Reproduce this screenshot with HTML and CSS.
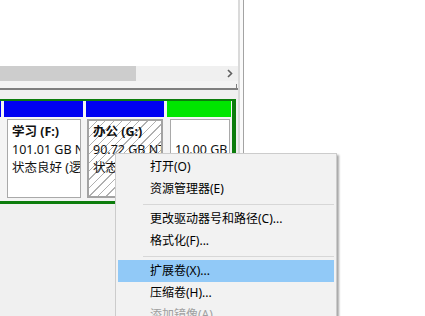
FILE: index.html
```html
<!DOCTYPE html>
<html lang="zh-CN">
<head>
<meta charset="UTF-8" />
<title>磁盘管理</title>
<link rel="stylesheet" href="styles.css">
</head>
<body>

<div class="window">
  <div class="pane">
    <div class="list"></div>
    <div class="hscroll">
      <div class="thumb"></div>
      <svg class="arrow" width="6" height="9" viewBox="0 0 6 9">
        <path d="M1 1 L4.5 4.5 L1 8" fill="none" stroke="#606060" stroke-width="1.6" />
      </svg>
    </div>
    <div class="list-foot"><span class="tick"></span></div>

    <div class="disks">
      <div class="volume-frame">
        <div class="part part-cut">
          <div class="bar bar-primary"></div>
        </div>
        <div class="part part-f">
          <div class="bar bar-primary"></div>
          <div class="box">
            <div class="vol-name">学习 (F:)</div>
            <div>101.01 GB NTFS</div>
            <div>状态良好 (逻辑驱动器)</div>
          </div>
        </div>
        <div class="part part-g">
          <div class="bar bar-primary"></div>
          <div class="box box-selected">
            <div class="vol-name">办公 (G:)</div>
            <div>90.72 GB NTFS</div>
            <div>状态良好 (逻辑驱动器)</div>
          </div>
        </div>
        <div class="part part-free">
          <div class="bar bar-free"></div>
          <div class="box box-free">
            <div class="vol-name">&nbsp;</div>
            <div>10.00 GB</div>
            <div>可用空间</div>
          </div>
        </div>
      </div>
    </div>
  </div>
  <div class="split"></div>
  <div class="side"></div>
</div>

<!-- context menu for the selected volume -->
<div class="menu" role="menu">
  <div class="menu-item">打开(O)</div>
  <div class="menu-item">资源管理器(E)</div>
  <div class="menu-sep"></div>
  <div class="menu-item">更改驱动器号和路径(C)...</div>
  <div class="menu-item">格式化(F)...</div>
  <div class="menu-sep"></div>
  <div class="menu-item menu-item-hover">扩展卷(X)...</div>
  <div class="menu-item">压缩卷(H)...</div>
  <div class="menu-item menu-item-disabled">添加镜像(A)...</div>
  <div class="menu-item">删除卷(D)...</div>
</div>

</body>
</html>
```

FILE: styles.css
```css
body {
  margin: 0;
  width: 425px;
  height: 316px;
  overflow: hidden;
  background: #fff;
  font-family: "Noto Sans", "Noto Sans CJK SC", sans-serif;
  font-size: 12px;
  color: #000;
}

/* Window layout */
.window {
  display: flex;
  height: 316px;
}

.pane {
  width: 238px;
  display: flex;
  flex-direction: column;
  overflow: hidden;
}

.list {
  height: 66px;
  background: #fff;
}

/* Horizontal scrollbar */
.hscroll {
  height: 15px;
  background: #f0f0f0;
  display: flex;
  align-items: center;
  justify-content: space-between;
}

.thumb {
  width: 136px;
  height: 15px;
  background: #cdcdcd;
}

.arrow {
  margin-right: 5px;
}

.list-foot {
  height: 7px;
  background: #f4f4f4;
  border-bottom: 2px solid #7f7f7f;
  display: flex;
  justify-content: flex-end;
  align-items: flex-end;
}

.tick {
  width: 1px;
  height: 4px;
  background: #7f7f7f;
  margin-right: 1px;
}

/* Disk graphic */
.disks {
  flex: 1;
  background: #f0f0f0;
  padding-top: 9px;
}

.volume-frame {
  display: flex;
  gap: 3px;
  width: max-content;
  margin-left: -50px;
  padding-right: 1px;
  border: solid #0d7d0d;
  border-width: 2px 4px 3px 2px;
  background: #f4f4f4;
}

.part {
  display: flex;
  flex-direction: column;
}

.part-cut { width: 49px; }
.part-f { width: 79px; }
.part-g { width: 78px; }
.part-free { width: 64px; }

.bar {
  height: 16px;
}

.bar-primary {
  background: #0000f2;
}

.bar-free {
  background: #00e600;
}

.box {
  height: 79px;
  box-sizing: border-box;
  margin: 2px 2px 3px 3px;
  padding: 3px 0 0 4px;
  border: 1px solid #a9a9a9;
  background: #fff;
  font-size: 12.5px;
  line-height: 18px;
  white-space: nowrap;
  overflow: hidden;
  color: #111;
}

.box-selected {
  margin: 2px 1px 3px 1px;
  padding: 2px 0 0 4px;
  border: 2px solid #a3a3a3;
  background: repeating-linear-gradient(135deg, #fff 0 5px, #b0b0b0 5px 6px);
}

.box-free {
  margin: 2px 1px 3px 3px;
}

.vol-name {
  font-weight: bold;
}

.split {
  width: 6px;
  box-sizing: border-box;
  border-left: 2px solid #dadada;
  border-right: 1px solid #a3a3a3;
  background: #fafafa;
}

.side {
  flex: 1;
  background: #fff;
}

/* Context menu */
.menu {
  position: absolute;
  left: 115px;
  top: 153px;
  width: 222px;
  box-sizing: border-box;
  padding: 2px 0;
  background: #f2f2f2;
  border: 1px solid #cccccc;
  box-shadow: 2px 2px 2px rgba(0,0,0,0.35);
}

.menu-item {
  height: 22px;
  line-height: 22px;
  margin: 0 2px;
  padding-left: 32px;
  white-space: nowrap;
}

.menu-item-hover {
  background: #91c9f7;
}

.menu-item-disabled {
  color: #a0a0a0;
}

.menu-sep {
  height: 1px;
  margin: 4px 2px 3px 27px;
  background: #d7d7d7;
}
```
